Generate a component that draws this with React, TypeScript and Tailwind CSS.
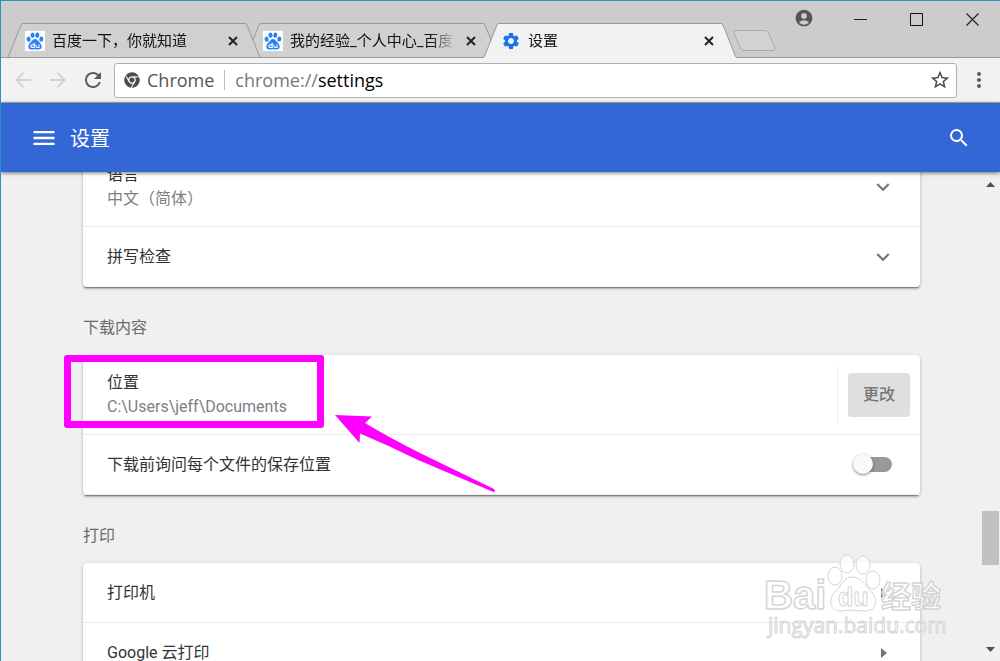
import React, { useState } from 'react';
import { FaChrome } from 'react-icons/fa';
import {
  MdAccountCircle,
  MdArrowBack,
  MdArrowForward,
  MdExpandMore,
  MdMenu,
  MdMoreVert,
  MdRefresh,
  MdSearch,
  MdSettings,
  MdStarBorder,
} from 'react-icons/md';

interface TabItem {
  title: string;
  icon: React.ReactNode;
  active?: boolean;
  layer: string;
}

const BaiduFavicon = () => (
  <svg width="20" height="20" viewBox="0 0 20 20" fill="#2a7ff5" className="bg-white">
    <ellipse cx="3.600" cy="8.200" rx="2" ry="2.600" transform="rotate(-12 3.600 8.200)" />
    <ellipse cx="7.500" cy="4.200" rx="2" ry="2.700" />
    <ellipse cx="12.300" cy="4.200" rx="2" ry="2.700" transform="rotate(8 12.300 4.200)" />
    <ellipse cx="16.300" cy="8" rx="2" ry="2.600" transform="rotate(12 16.300 8)" />
    <path d="M10 8 C12 8 13 10 14.500 11.500 C17.500 14 17.500 18.500 13.800 18.600 C12 18.600 11 18.200 10 18.200 C9 18.200 8 18.600 6.200 18.600 C2.500 18.500 2.500 14 5.500 11.500 C7 10 8 8 10 8 Z" />
    <path d="M9.200 11.800 V16.500 H7.300 Q5.800 16.500 5.800 15.200 Q5.800 13.900 7.300 13.900 H9.200 M11 13.500 V15.600 Q11 16.500 12 16.500 H14 V13.500" fill="none" stroke="#fff" strokeWidth="1.100" />
  </svg>
);

const tabs: TabItem[] = [
  { title: '百度一下，你就知道', icon: <BaiduFavicon />, layer: 'z-20' },
  { title: '我的经验_个人中心_百度经验', icon: <BaiduFavicon />, layer: 'z-10' },
  { title: '设置', icon: <MdSettings className="size-5 text-[#1a73e8]" />, active: true, layer: 'z-30' },
];

const TabEdge: React.FC<{ active?: boolean; flip?: boolean }> = ({ active, flip }) => (
  <svg
    width="16"
    height="35"
    viewBox="0 0 16 35"
    className={flip ? 'shrink-0 -scale-x-100' : 'shrink-0'}
    fill={active ? '#f2f2f2' : '#d0d0d0'}
  >
    <path d="M0 35 L1.5 33 L14 2 Q14.6 .5 16 .5 V35 Z" />
    <path d="M0 34.5 Q1 34.5 1.6 33 L14 2 Q14.6 .5 16 .5" fill="none" stroke="#999" />
    {!active && <path d="M0 34.5 H16" stroke="#999" />}
  </svg>
);

const Tab: React.FC<{ item: TabItem }> = ({ item }) => (
  <div className={`relative -mb-px -ml-4 flex h-[35px] min-w-0 max-w-[254px] flex-1 ${item.layer}`}>
    <TabEdge active={item.active} />
    <div
      className={
        item.active
          ? 'flex min-w-0 flex-1 items-center border-t border-[#999] bg-[#f2f2f2] px-0.5'
          : 'flex min-w-0 flex-1 items-center border-y border-[#999] bg-[#d0d0d0] px-0.5'
      }
    >
      <a href="#" className="flex min-w-0 flex-1 items-center gap-[7px]">
        <span className="shrink-0">{item.icon}</span>
        <span className="flex-1 overflow-hidden whitespace-nowrap text-[15px] leading-5 text-[#111] [mask-image:linear-gradient(to_right,black_calc(100%-24px),transparent)]">
          {item.title}
        </span>
      </a>
      <button aria-label="关闭标签页" className="ml-1.5 flex h-5 w-5 shrink-0 items-center justify-center">
        <svg width="10" height="10" viewBox="0 0 10 10" stroke="#222" strokeWidth="2">
          <path d="M1 1 L9 9 M9 1 L1 9" />
        </svg>
      </button>
    </div>
    <TabEdge active={item.active} flip />
  </div>
);

const WindowButtons = () => (
  <div className="flex self-start">
    <button aria-label="用户" className="flex h-[34px] w-14 items-center justify-center">
      <MdAccountCircle className="size-5 text-[#555]" />
    </button>
    <button aria-label="最小化" className="flex h-9 w-14 items-center justify-center">
      <svg width="13" height="13" viewBox="0 0 13 13" stroke="#222"><path d="M0 6.5 H13" /></svg>
    </button>
    <button aria-label="最大化" className="flex h-9 w-14 items-center justify-center">
      <svg width="13" height="13" viewBox="0 0 13 13" stroke="#111" fill="none"><path d="M.5 .5 H12.5 V12.5 H.5 Z" /></svg>
    </button>
    <button aria-label="关闭" className="flex h-9 w-14 items-center justify-center">
      <svg width="13" height="13" viewBox="0 0 13 13" stroke="#222" strokeWidth="1.2"><path d="M.5 .5 L12.5 12.5 M12.5 .5 L.5 12.5" /></svg>
    </button>
  </div>
);

const TabStrip = () => (
  <div className="flex h-[57px] shrink-0 items-end border-b border-[#999] bg-[#ccc]">
    <div className="flex min-w-0 flex-1 items-end pl-[22px]">
      {tabs.map((item) => (
        <Tab key={item.title} item={item} />
      ))}
      <button aria-label="新标签页" className="mb-[5px] -ml-1">
        <svg width="43" height="22" viewBox="0 0 43 22" fill="#d2d2d2" stroke="#aaa">
          <path d="M2 .5 H32 Q34 .5 35 2 L42 18 Q42.6 20.5 40 20.5 H11 Q9 20.5 8 19 L.8 2.5 Q.5 .8 2 .5 Z" />
        </svg>
      </button>
    </div>
    <WindowButtons />
  </div>
);

const Toolbar = () => (
  <div className="flex h-[45px] shrink-0 items-center border-b border-[#aaa] bg-[#f2f2f2] pl-1">
    <button aria-label="后退" className="flex w-[35px] justify-center"><MdArrowBack className="size-6 text-[#d2d2d2]" /></button>
    <button aria-label="前进" className="flex w-[35px] justify-center"><MdArrowForward className="size-6 text-[#d2d2d2]" /></button>
    <button aria-label="重新加载" className="flex w-[35px] justify-center"><MdRefresh className="size-6 text-[#5a5a5a]" /></button>
    <div className="ml-1 flex h-[35px] min-w-0 flex-1 items-center rounded-[3px] border border-[#b0b0b0] bg-white pl-[9px] pr-[5px] font-['Open_Sans','Noto_Sans_CJK_SC',sans-serif] text-lg leading-6">
      <FaChrome className="size-4 shrink-0 text-[#4d4d4d]" />
      <span className="ml-[7px] text-[#555]">Chrome</span>
      <span className="mx-2.5 h-5 w-px bg-[#bbb]" />
      <label htmlFor="address" className="text-[#777]">chrome://</label>
      <input id="address" defaultValue="settings" className="min-w-0 flex-1 bg-transparent text-black outline-none" />
      <button aria-label="收藏"><MdStarBorder className="size-[22px] text-[#444]" /></button>
    </div>
    <button aria-label="菜单" className="flex w-[43px] justify-center"><MdMoreVert className="size-6 text-[#5a5a5a]" /></button>
  </div>
);

const Header = () => (
  <header className="relative z-10 flex h-[69px] shrink-0 items-center bg-[#3367d6] pl-[29px] pr-[29px] text-white shadow-[0_1px_4px_rgba(0,0,0,0.55)]">
    <button aria-label="主菜单"><MdMenu className="size-7" /></button>
    <h1 className="ml-3 flex-1 pt-[3px] text-xl leading-6">设置</h1>
    <button aria-label="搜索"><MdSearch className="size-6" /></button>
  </header>
);

const Card: React.FC<{ children: React.ReactNode }> = ({ children }) => (
  <div className="relative divide-y divide-[#ececec] rounded-sm bg-white shadow-[0_2px_2px_rgba(0,0,0,0.2),0_1px_4px_rgba(0,0,0,0.15),0_2px_1px_-1px_rgba(0,0,0,0.3)]">
    {children}
  </div>
);

const SectionTitle: React.FC<{ children: React.ReactNode }> = ({ children }) => (
  <h2 className="mb-[15px] mt-[29px] leading-6 text-[#6b6b6b]">{children}</h2>
);

const Row: React.FC<{ title: string; detail?: string; end: React.ReactNode }> = ({ title, detail, end }) => (
  <button className={`flex w-full items-center justify-between px-6 text-left ${detail ? 'h-20' : 'h-[60px]'}`}>
    <span>
      <span className="block leading-6 text-[#333]">{title}</span>
      {detail && <span className="block leading-6 text-[#808080]">{detail}</span>}
    </span>
    {end}
  </button>
);

const Expand = () => <MdExpandMore className="size-[26px] text-[#757575]" />;

const Caret = () => (
  <svg width="6" height="10" viewBox="0 0 6 10" fill="#757575" className="mr-[9px]"><path d="M0 0 L6 5 L0 10 Z" /></svg>
);

// Pink marker around the download location with an arrow pointing at it
const Highlight = () => (
  <>
    <div className="pointer-events-none absolute -left-[19px] top-0 z-10 h-[73px] w-[260px] rounded-[3px] border-7 border-[#ff00ff]" />
    <svg width="170" height="85" viewBox="0 0 170 85" fill="#ff00ff" className="pointer-events-none absolute left-[247px] top-[55px] z-10">
      <path d="M5 5 L42 6.5 L35 13 Q60 28 90 43 L164 79 Q166 81 163.500 82 L88 50 Q60 36 30 23.500 L29.500 33 Z" />
    </svg>
  </>
);

const Scrollbar = () => (
  <div className="mr-px flex w-[17px] shrink-0 flex-col items-center">
    <button aria-label="向上滚动" className="flex h-6 items-center">
      <svg width="9" height="5" viewBox="0 0 9 5" fill="#505050"><path d="M0 5 L4.500 0 L9 5 Z" /></svg>
    </button>
    <div className="grow-[315]" />
    <div className="h-[54px] w-[17px] bg-[#c1c1c1]" />
    <div className="grow-[72]" />
    <button aria-label="向下滚动" className="flex h-6 items-center">
      <svg width="9" height="5" viewBox="0 0 9 5" fill="#505050"><path d="M0 0 L4.500 5 L9 0 Z" /></svg>
    </button>
  </div>
);

const Watermark = () => (
  <svg
    width="186"
    height="92"
    viewBox="0 0 186 92"
    className="pointer-events-none absolute bottom-4 right-[51px] z-20"
    fill="#fff"
    fillOpacity="0.75"
    stroke="#d0d0d0"
    strokeOpacity="0.9"
    strokeLinejoin="round"
    fontFamily="'Liberation Sans', 'Noto Sans CJK SC', sans-serif"
  >
    <ellipse cx="72" cy="23" rx="7" ry="9" />
    <ellipse cx="84" cy="11" rx="7" ry="9" />
    <ellipse cx="100" cy="12" rx="7" ry="9" />
    <ellipse cx="110" cy="27" rx="7" ry="9" />
    <path d="M90 24 C98 24 102 32 107 37 C116 46 114 58 102 58 C95 58 87 56 79 58 C66 59 65 46 72 39 C79 32 81 24 90 24 Z" />
    <text x="1" y="56" fontSize="40" fontWeight="700" strokeWidth="1.5">Bai</text>
    <text x="75" y="53" fontSize="25" fontWeight="700">du</text>
    <text x="118" y="54" fontSize="30" fontWeight="700" strokeWidth="1.5">经验</text>
    <text x="5" y="80" fontSize="21" fontFamily="'Open Sans', sans-serif">jingyan.baidu.com</text>
  </svg>
);

const Settings = () => {
  const [askLocation, setAskLocation] = useState(false);

  return (
    <div className="relative flex min-h-0 flex-1 overflow-hidden bg-[#f0f0f0]">
      <main className="-mt-[25px] min-w-0 flex-1 pl-[82px] pr-[62px]">
        <Card>
          <Row title="语言" detail="中文（简体）" end={<Expand />} />
          <Row title="拼写检查" end={<Expand />} />
        </Card>

        <SectionTitle>下载内容</SectionTitle>
        <Card>
          <div className="flex h-20 items-center pl-6 pr-[10px]">
            <div className="flex-1">
              <div className="leading-6 text-[#333]">位置</div>
              <div className="leading-6 text-[#808080]">C:\Users\jeff\Documents</div>
            </div>
            <div className="flex h-14 items-center border-l border-[#ececec] pl-[10px]">
              <button className="h-11 rounded-[3px] bg-[#dfdfdf] px-[15px] font-medium text-[#777]">更改</button>
            </div>
          </div>
          <div className="flex h-[60px] items-center justify-between pl-6 pr-7">
            <label htmlFor="ask-location" className="text-[#333]">下载前询问每个文件的保存位置</label>
            <input
              id="ask-location"
              type="checkbox"
              checked={askLocation}
              onChange={(e) => setAskLocation(e.target.checked)}
              className="relative h-[15px] w-9 appearance-none rounded-full bg-[#999] before:absolute before:-left-[3px] before:-top-[3px] before:size-5 before:rounded-full before:bg-[#fafafa] before:shadow-[0_1px_3px_rgba(0,0,0,0.5)] checked:bg-[#9cb6ec] checked:before:left-5 checked:before:bg-[#3367d6]"
            />
          </div>
          <Highlight />
        </Card>

        <SectionTitle>打印</SectionTitle>
        <Card>
          <Row title="打印机" end={<Caret />} />
          <Row title="Google 云打印" end={<Caret />} />
        </Card>
      </main>
      <Scrollbar />
      <Watermark />
    </div>
  );
};

const App: React.FC = () => (
  <div className="flex h-screen flex-col overflow-hidden border-l border-t border-[#2f8dc8] font-[Roboto,'Noto_Sans_CJK_SC',sans-serif] text-base">
    <TabStrip />
    <Toolbar />
    <Header />
    <Settings />
  </div>
);

export default App;
